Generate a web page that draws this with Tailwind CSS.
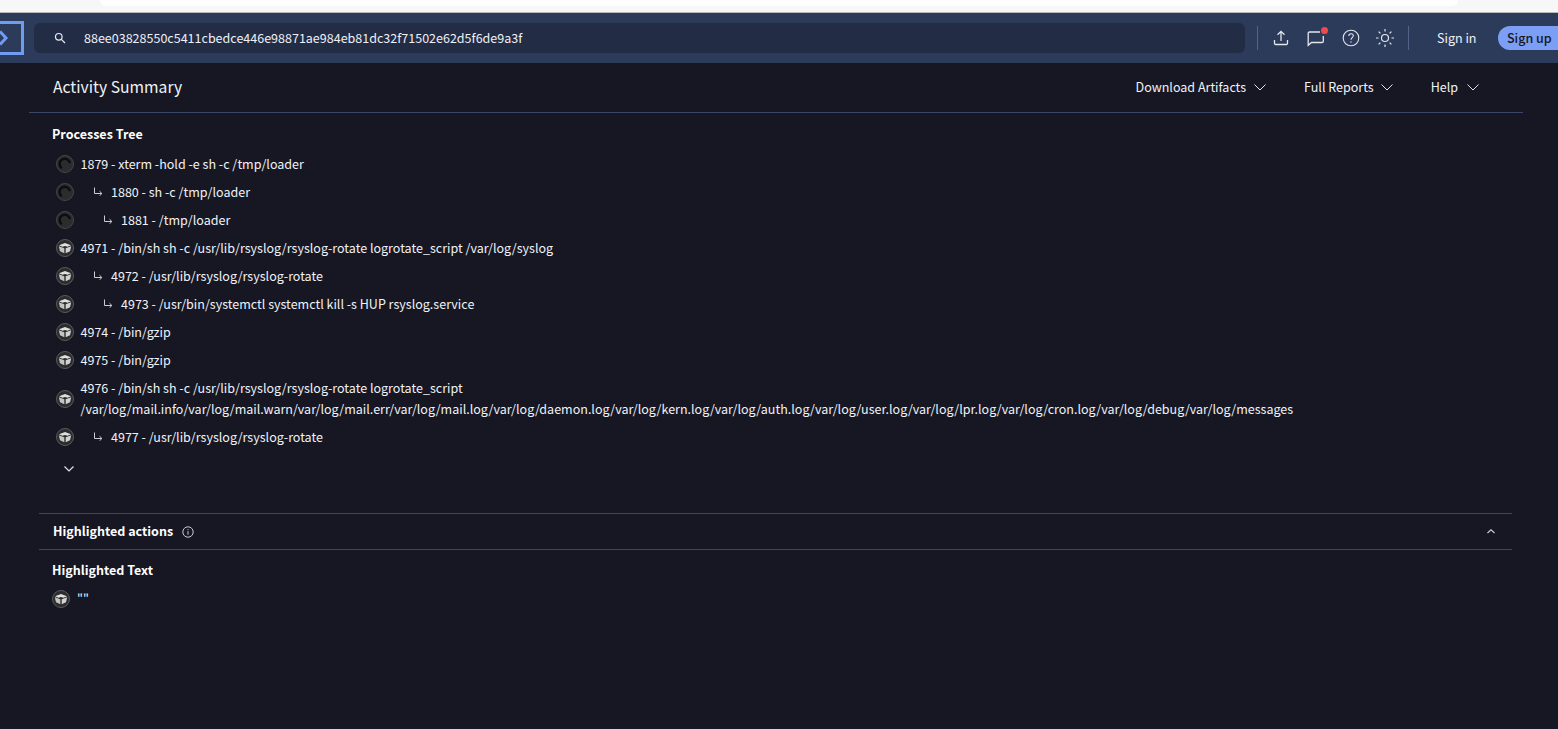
<!DOCTYPE html>
<html lang="en">
<head>
    <meta charset="UTF-8">
    <title>Activity Summary</title>
    <script src="https://cdn.jsdelivr.net/npm/@tailwindcss/browser@4"></script>
</head>
<body class="bg-[#161723] h-[729px] overflow-hidden font-['Noto_Sans_CJK_JP','Noto_Sans',sans-serif] text-[12.52px] leading-[21px] text-[#f0f2f7]">
    <svg class="hidden">
        <symbol id="swirl" viewBox="0 0 18 18">
            <circle cx="9" cy="9" r="8.5" fill="#2b2c2d" stroke="#454647"/>
            <path d="M5.800 13.200A5.200 5.200 0 1 1 13.900 8.200" fill="none" stroke="#0c0d0f" stroke-width="2.400"/>
        </symbol>
        <symbol id="cube" viewBox="0 0 18 18">
            <circle cx="9" cy="9" r="8.500" fill="#2c2c2d" stroke="#5a5b5c"/>
            <path d="M9 4 15 6.200 11.500 7.800 9 6.900 6.500 7.800 3 6.200z" fill="#dedede"/>
            <path d="M2.800 7.200 8.300 9.300V14.200L4 12.200z" fill="#c4c4c4"/>
            <path d="M15.200 7.200 9.700 9.300V14.200L14 12.200z" fill="#d2d2d2"/>
        </symbol>
        <symbol id="branch" viewBox="0 0 10 9">
            <path d="M1.500 .5V6.500H8.800M6.500 4.200 8.900 6.500 6.500 8.800" fill="none" stroke="#c8ccd4"/>
        </symbol>
    </svg>

    <!-- browser strip -->
    <div class="h-[13px] bg-[#f7f7f7] border-b border-[#b8b8b8] px-[100px]">
        <div class="h-[6px] bg-white rounded-b-xl"></div>
    </div>

    <!-- Header -->
    <header class="h-[50px] bg-[#2d3b5b] flex items-center">
        <div class="w-[24px] h-[34px] shrink-0 border-[3px] border-l-0 border-[#6f9bf0] flex items-center overflow-hidden">
            <svg width="10" height="20" viewBox="0 0 10 20" class="shrink-0"><path d="M0 3.500l6 6.500-6 6.500" fill="none" stroke="#6f9bf0" stroke-width="3"/></svg>
        </div>
        <div class="ml-[10px] w-[1211px] h-[30px] shrink-0 bg-[#232c45] rounded-md flex items-center pl-[20px]">
            <svg width="12" height="12" viewBox="0 0 12 12" fill="none" stroke="#e8ebf2" stroke-width="1.200"><circle cx="4.800" cy="4.800" r="3.300"/><path d="M7.300 7.300l3.700 3.700"/></svg>
            <span class="ml-[18px] pb-[2px] text-[#eef0f5]">88ee03828550c5411cbedce446e98871ae984eb81dc32f71502e62d5f6de9a3f</span>
        </div>
        <div class="ml-[12px] w-px h-[24px] shrink-0 bg-[#52648c]"></div>
        <div class="ml-[15px] flex items-center gap-[16px] shrink-0">
            <svg width="16" height="18" viewBox="0 0 16 18" fill="none" stroke="#e2e6ee" stroke-width="1.300"><path d="M8 12V2.500M4.500 5.800 8 2.300l3.500 3.500M1.500 11v3.200c0 .8.500 1.300 1.300 1.300h10.400c.8 0 1.300-.5 1.300-1.300V11"/></svg>
            <div class="relative w-[19px] h-[18px] ml-[2px]">
                <svg width="18" height="18" viewBox="0 0 18 18" fill="none" stroke="#e2e6ee" stroke-width="1.300"><path d="M13 3H2.500C1.700 3 1.200 3.500 1.200 4.300V16.300L4.500 13.500H15c.8 0 1.300-.5 1.300-1.300V7"/></svg>
                <span class="absolute top-[-2px] right-[-2px] w-[7px] h-[7px] rounded-full bg-[#f04a4a]"></span>
            </div>
            <svg width="18" height="18" viewBox="0 0 18 18" fill="none" stroke="#e2e6ee" stroke-width="1.100"><circle cx="9" cy="9" r="7.800"/><path d="M6.800 7c0-1.300 1-2.200 2.300-2.200S11.300 5.600 11.300 6.800c0 1.700-2.300 1.900-2.300 3.900"/><circle cx="9" cy="13" r=".7" fill="#e2e6ee" stroke="none"/></svg>
            <svg width="20" height="20" viewBox="0 0 20 20" fill="none" stroke="#e2e6ee" stroke-width="1.200" class="ml-[-1px]"><circle cx="10" cy="10" r="3.500"/><path d="M10 1v2.500M10 16.500V19M1 10h2.500M16.500 10H19M3.600 3.600l1.800 1.800M14.600 14.600l1.800 1.800M3.600 16.400l1.800-1.800M14.600 5.400l1.800-1.800"/></svg>
        </div>
        <div class="ml-[13px] w-px h-[24px] shrink-0 bg-[#52648c]"></div>
        <span class="ml-[28px] w-[61px] pb-[2px] shrink-0 text-[#f0f2f7]">Sign in</span>
        <span class="h-[24px] w-[60px] pl-[9px] pb-[2px] shrink-0 rounded-l-full rounded-r-[10px] bg-[#7c9ff5] text-[#161723] font-medium flex items-center">Sign up</span>
    </header>

    <main class="pl-[29px] pr-[35px]">
        <!-- Title bar -->
        <div class="h-[50px] border-b border-[#3a4668] flex items-center justify-between pl-[24px] pr-[44px]">
            <h1 class="text-[15.7px] pb-[2px] font-normal">Activity Summary</h1>
            <nav class="flex items-center gap-[38px]">
                <button class="flex items-center gap-[8px] pb-[2px]">Download Artifacts
                    <svg class="mt-[2px]" width="12" height="7" viewBox="0 0 12 7" fill="none" stroke="#dfe2ea"><path d="M.5.5 6 6l5.500-5.500"/></svg>
                </button>
                <button class="flex items-center gap-[7px] pb-[2px]">Full Reports
                    <svg class="mt-[2px]" width="12" height="7" viewBox="0 0 12 7" fill="none" stroke="#dfe2ea"><path d="M.5.5 6 6l5.500-5.500"/></svg>
                </button>
                <button class="flex items-center gap-[9px] pb-[2px]">Help
                    <svg class="mt-[2px]" width="12" height="7" viewBox="0 0 12 7" fill="none" stroke="#dfe2ea"><path d="M.5.5 6 6l5.500-5.500"/></svg>
                </button>
            </nav>
        </div>

        <!-- Processes Tree -->
        <section class="pl-[23px] pt-[10px]">
            <h2 class="font-bold text-white">Processes Tree</h2>
            <ul class="mt-[5px] pl-[4px]">
                <li class="flex items-center py-[3.500px]"><svg class="w-[18px] h-[18px] mt-[2px] shrink-0 mr-[6.500px]"><use href="#swirl"/></svg>1879 - xterm -hold -e sh -c /tmp/loader</li>
                <li class="flex items-center py-[3.500px]"><svg class="w-[18px] h-[18px] mt-[2px] shrink-0 mr-[19px]"><use href="#swirl"/></svg><svg class="w-[10px] h-[9px] mt-[1px] mr-[8px] shrink-0"><use href="#branch"/></svg>1880 - sh -c /tmp/loader</li>
                <li class="flex items-center py-[3.500px]"><svg class="w-[18px] h-[18px] mt-[2px] shrink-0 mr-[29px]"><use href="#swirl"/></svg><svg class="w-[10px] h-[9px] mt-[1px] mr-[8px] shrink-0"><use href="#branch"/></svg>1881 - /tmp/loader</li>
                <li class="flex items-center py-[3.500px]"><svg class="w-[18px] h-[18px] mt-[2px] shrink-0 mr-[6.500px]"><use href="#cube"/></svg>4971 - /bin/sh sh -c /usr/lib/rsyslog/rsyslog-rotate logrotate_script /var/log/syslog</li>
                <li class="flex items-center py-[3.500px]"><svg class="w-[18px] h-[18px] mt-[2px] shrink-0 mr-[19px]"><use href="#cube"/></svg><svg class="w-[10px] h-[9px] mt-[1px] mr-[8px] shrink-0"><use href="#branch"/></svg>4972 - /usr/lib/rsyslog/rsyslog-rotate</li>
                <li class="flex items-center py-[3.500px]"><svg class="w-[18px] h-[18px] mt-[2px] shrink-0 mr-[29px]"><use href="#cube"/></svg><svg class="w-[10px] h-[9px] mt-[1px] mr-[8px] shrink-0"><use href="#branch"/></svg>4973 - /usr/bin/systemctl systemctl kill -s HUP rsyslog.service</li>
                <li class="flex items-center py-[3.500px]"><svg class="w-[18px] h-[18px] mt-[2px] shrink-0 mr-[6.500px]"><use href="#cube"/></svg>4974 - /bin/gzip</li>
                <li class="flex items-center py-[3.500px]"><svg class="w-[18px] h-[18px] mt-[2px] shrink-0 mr-[6.500px]"><use href="#cube"/></svg>4975 - /bin/gzip</li>
                <li class="flex items-center py-[3.500px]"><svg class="w-[18px] h-[18px] mt-[2px] shrink-0 mr-[6.500px]"><use href="#cube"/></svg><span>4976 - /bin/sh sh -c /usr/lib/rsyslog/rsyslog-rotate logrotate_script<br>/var/log/mail.info/var/log/mail.warn/var/log/mail.err/var/log/mail.log/var/log/daemon.log/var/log/kern.log/var/log/auth.log/var/log/user.log/var/log/lpr.log/var/log/cron.log/var/log/debug/var/log/messages</span></li>
                <li class="flex items-center py-[3.500px]"><svg class="w-[18px] h-[18px] mt-[2px] shrink-0 mr-[19px]"><use href="#cube"/></svg><svg class="w-[10px] h-[9px] mt-[1px] mr-[8px] shrink-0"><use href="#branch"/></svg>4977 - /usr/lib/rsyslog/rsyslog-rotate</li>
            </ul>
            <svg class="ml-[12px] mt-[16px]" width="10" height="6" viewBox="0 0 10 6" fill="none" stroke="#dfe2ea" stroke-width="1.200"><path d="M.5.500 5 5 9.500.5"/></svg>
        </section>

        <!-- Highlighted actions -->
        <section class="ml-[10px] mr-[11px] mt-[41px] h-[37px] border-y border-[#3f4658] flex items-center justify-between pl-[14px] pr-[17px]">
            <div class="flex items-center gap-[9px]">
                <span class="font-bold pb-[2px] text-white">Highlighted actions</span>
                <svg width="12" height="12" viewBox="0 0 12 12" fill="none" stroke="#c9ccd4"><circle cx="6" cy="6" r="5.200"/><path d="M6 5.200v3.500M6 3.200v1"/></svg>
            </div>
            <svg width="8" height="5" viewBox="0 0 8 5" fill="none" stroke="#c9ccd4" stroke-width="1.200"><path d="M.5 4 4 .8 7.500 4"/></svg>
        </section>

        <section class="pl-[23px] pt-[9px]">
            <h2 class="font-bold text-white">Highlighted Text</h2>
            <div class="mt-[7px] flex items-center"><svg class="w-[18px] h-[18px] shrink-0 mr-[7px]"><use href="#cube"/></svg><span class="pb-[2px]">""</span></div>
        </section>
    </main>
</body>
</html>
